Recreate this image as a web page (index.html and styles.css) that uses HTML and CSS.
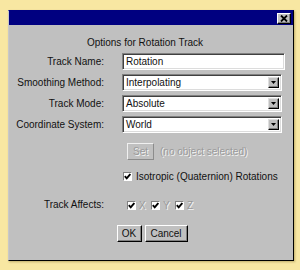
FILE: index.html
```html
<!DOCTYPE html>
<html>
<head>
<meta charset="utf-8">
<link rel="stylesheet" href="styles.css">
</head>
<body>
<div class="dialog">
  <div class="titlebar">
    <div class="close"><svg width="8" height="7" viewBox="0 0 8 7"><path d="M1 0.5 L7 6.5 M7 0.5 L1 6.5" stroke="#000" stroke-width="1.8"/></svg></div>
  </div>
  <div class="content">
    <div class="heading">Options for Rotation Track</div>
    <div class="form">
      <div class="label">Track Name:</div>
      <div class="field text">Rotation</div>
      <div class="label">Smoothing Method:</div>
      <div class="field combo"><span class="value">Interpolating</span><span class="arrow"><svg width="5" height="3" viewBox="0 0 5 3"><path d="M0 0 H5 L2.5 3 Z" fill="#000"/></svg></span></div>
      <div class="label">Track Mode:</div>
      <div class="field combo"><span class="value">Absolute</span><span class="arrow"><svg width="5" height="3" viewBox="0 0 5 3"><path d="M0 0 H5 L2.5 3 Z" fill="#000"/></svg></span></div>
      <div class="label">Coordinate System:</div>
      <div class="field combo"><span class="value">World</span><span class="arrow"><svg width="5" height="3" viewBox="0 0 5 3"><path d="M0 0 H5 L2.5 3 Z" fill="#000"/></svg></span></div>
    </div>
    <div class="set-row">
      <div class="btn disabled set">Set</div>
      <span class="dim">(no object selected)</span>
    </div>
    <div class="check-row">
      <span class="box"><svg width="7" height="7" viewBox="0 0 7 7"><path d="M0.8 3.2 L2.7 5.3 L6.3 1" fill="none" stroke="#000" stroke-width="1.9"/></svg></span>
      <span>Isotropic (Quaternion) Rotations</span>
    </div>
    <div class="affects">
      <div class="label">Track Affects:</div>
      <div class="axes">
        <span class="axis"><span class="box"><svg width="7" height="7" viewBox="0 0 7 7"><path d="M0.8 3.2 L2.7 5.3 L6.3 1" fill="none" stroke="#000" stroke-width="1.9"/></svg></span><span class="dim">X</span></span>
        <span class="axis"><span class="box"><svg width="7" height="7" viewBox="0 0 7 7"><path d="M0.8 3.2 L2.7 5.3 L6.3 1" fill="none" stroke="#000" stroke-width="1.9"/></svg></span><span class="dim">Y</span></span>
        <span class="axis"><span class="box"><svg width="7" height="7" viewBox="0 0 7 7"><path d="M0.8 3.2 L2.7 5.3 L6.3 1" fill="none" stroke="#000" stroke-width="1.9"/></svg></span><span class="dim">Z</span></span>
      </div>
    </div>
    <div class="buttons">
      <div class="btn ok">OK</div>
      <div class="btn cancel">Cancel</div>
    </div>
  </div>
</div>
</body>
</html>
```
FILE: styles.css
```css
html, body {
  margin: 0;
  background: #f8e7a2;
}
body {
  width: 300px;
  height: 270px;
  padding: 10px 0 0 8px;
  box-sizing: border-box;
  font-family: "Liberation Sans", Arial, sans-serif;
  font-size: 10px;
  color: #111;
}
.dialog {
  width: 286px;
  height: 251px;
  box-sizing: border-box;
  background: #c0c0c0;
  border: 1px solid;
  border-color: #000080 #000 #000 #c8c8c8;
  box-shadow: 1px 1px 2px rgba(90, 70, 0, 0.35);
  display: flex;
  flex-direction: column;
}
.titlebar {
  height: 14px;
  background: #000080;
  display: flex;
  justify-content: flex-end;
  align-items: center;
  padding-right: 2px;
}
.close {
  width: 14px;
  height: 11px;
  box-sizing: border-box;
  background: #c0c0c0;
  border: 1px solid;
  border-color: #fff #000 #000 #fff;
  box-shadow: inset -1px -1px #808080;
  display: flex;
  align-items: center;
  justify-content: center;
}
.close svg { display: block; }
.content {
  flex: 1;
  display: flex;
  flex-direction: column;
  padding-top: 12px;
}
.heading {
  line-height: 12px;
  text-align: center;
  padding-right: 12px;
}
.form {
  margin-top: 4px;
  display: grid;
  grid-template-columns: 95px 163px;
  column-gap: 18px;
  row-gap: 4px;
}
.label {
  text-align: right;
  line-height: 17px;
  white-space: nowrap;
}
.field {
  height: 17px;
  box-sizing: border-box;
  background: #fff;
  border: 1px solid;
  border-color: #808080 #fff #fff #808080;
  box-shadow: inset 1px 1px #404040, inset -1px -1px #dcdcdc;
  line-height: 15px;
  padding-left: 3px;
  white-space: nowrap;
}
.combo {
  width: 160px;
  display: flex;
  padding: 2px 2px 2px 3px;
  line-height: 11px;
}
.combo .value { flex: 1; }
.arrow {
  width: 11px;
  height: 11px;
  box-sizing: border-box;
  background: #c0c0c0;
  border: 1px solid;
  border-color: #dfdfdf #000 #000 #dfdfdf;
  box-shadow: inset -1px -1px #808080;
  display: flex;
  align-items: center;
  justify-content: center;
}
.arrow svg { display: block; }
.btn {
  height: 17px;
  box-sizing: border-box;
  border: 1px solid;
  border-color: #fff #000 #000 #fff;
  box-shadow: inset -1px -1px #808080;
  display: flex;
  align-items: center;
  justify-content: center;
  white-space: nowrap;
}
.btn.disabled {
  border-color: #f0f0f0 #8c8c8c #8c8c8c #f0f0f0;
  box-shadow: none;
  color: #9a9a9a;
  text-shadow: 1px 1px 0 #f4f4f4;
}
.set-row {
  margin-top: 10px;
  padding-left: 118px;
  display: flex;
  align-items: center;
  gap: 6px;
}
.set { width: 27px; }
.dim {
  color: #9a9a9a;
  text-shadow: 1px 1px 0 #f4f4f4;
}
.check-row {
  margin-top: 10px;
  height: 12px;
  padding-left: 114px;
  display: flex;
  align-items: center;
  gap: 4px;
}
.box {
  width: 9px;
  height: 9px;
  box-sizing: border-box;
  background: #fff;
  border: 1px solid;
  border-color: #808080 #fff #fff #808080;
  display: flex;
  align-items: center;
  justify-content: center;
}
.box svg { display: block; }
.affects {
  margin-top: 17px;
  height: 12px;
  display: grid;
  grid-template-columns: 95px auto;
  column-gap: 23px;
  align-items: center;
}
.affects .label { line-height: 12px; }
.axes {
  display: flex;
  gap: 0;
}
.axis {
  width: 24px;
  display: flex;
  align-items: center;
  gap: 3px;
}
.buttons {
  margin-top: 14px;
  display: flex;
  justify-content: center;
  gap: 3px;
  padding-left: 2px;
}
.ok { width: 25px; }
.cancel { width: 43px; }
```
